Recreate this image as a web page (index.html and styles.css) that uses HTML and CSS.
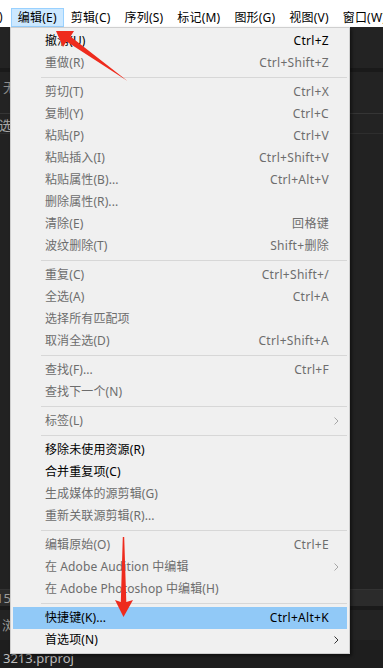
FILE: index.html
```html
<!DOCTYPE html>
<html lang="zh-CN">

    <head>
        <meta charset="UTF-8">
        <meta name="viewport" content="width=device-width, initial-scale=1.0">
        <title>编辑菜单</title>
        <link rel="stylesheet" href="styles.css">
    </head>

    <body>
        <div class="menubar">
            <span class="menubar-cut">)</span>
            <span class="menubar-item active">编辑(E)</span>
            <span class="menubar-item">剪辑(C)</span>
            <span class="menubar-item">序列(S)</span>
            <span class="menubar-item">标记(M)</span>
            <span class="menubar-item">图形(G)</span>
            <span class="menubar-item">视图(V)</span>
            <span class="menubar-item">窗口(W)</span>
        </div>

        <div class="workspace">
            <div class="panel-head"></div>
            <div class="panel-split"></div>
            <div class="panel-title">无标题</div>
            <div class="panel-row">选择</div>
            <div class="panel-body"></div>
            <div class="time-bar">15:00</div>
            <div class="browser-row">浏览器</div>
            <div class="project-row">3213.prproj</div>
        </div>

        <div class="dropdown">
            <div class="item"><span class="label">撤消(U)</span><span class="key">Ctrl+Z</span><span class="sub"></span></div>
            <div class="item off"><span class="label">重做(R)</span><span class="key">Ctrl+Shift+Z</span><span class="sub"></span></div>
            <div class="sep"></div>
            <div class="item off"><span class="label">剪切(T)</span><span class="key">Ctrl+X</span><span class="sub"></span></div>
            <div class="item off"><span class="label">复制(Y)</span><span class="key">Ctrl+C</span><span class="sub"></span></div>
            <div class="item off"><span class="label">粘贴(P)</span><span class="key">Ctrl+V</span><span class="sub"></span></div>
            <div class="item off"><span class="label">粘贴插入(I)</span><span class="key">Ctrl+Shift+V</span><span class="sub"></span></div>
            <div class="item off"><span class="label">粘贴属性(B)...</span><span class="key">Ctrl+Alt+V</span><span class="sub"></span></div>
            <div class="item off"><span class="label">删除属性(R)...</span><span class="key"></span><span class="sub"></span></div>
            <div class="item off"><span class="label">清除(E)</span><span class="key">回格键</span><span class="sub"></span></div>
            <div class="item off"><span class="label">波纹删除(T)</span><span class="key">Shift+删除</span><span class="sub"></span></div>
            <div class="sep"></div>
            <div class="item off"><span class="label">重复(C)</span><span class="key">Ctrl+Shift+/</span><span class="sub"></span></div>
            <div class="item off"><span class="label">全选(A)</span><span class="key">Ctrl+A</span><span class="sub"></span></div>
            <div class="item off"><span class="label">选择所有匹配项</span><span class="key"></span><span class="sub"></span></div>
            <div class="item off"><span class="label">取消全选(D)</span><span class="key">Ctrl+Shift+A</span><span class="sub"></span></div>
            <div class="sep"></div>
            <div class="item off"><span class="label">查找(F)...</span><span class="key">Ctrl+F</span><span class="sub"></span></div>
            <div class="item off"><span class="label">查找下一个(N)</span><span class="key"></span><span class="sub"></span></div>
            <div class="sep"></div>
            <div class="item off"><span class="label">标签(L)</span><span class="key"></span><span class="sub"><svg width="5" height="8" viewBox="0 0 5 8"><polyline points="0.5,0.5 4,4 0.5,7.5" /></svg></span></div>
            <div class="sep"></div>
            <div class="item"><span class="label">移除未使用资源(R)</span><span class="key"></span><span class="sub"></span></div>
            <div class="item"><span class="label">合并重复项(C)</span><span class="key"></span><span class="sub"></span></div>
            <div class="item off"><span class="label">生成媒体的源剪辑(G)</span><span class="key"></span><span class="sub"></span></div>
            <div class="item off"><span class="label">重新关联源剪辑(R)...</span><span class="key"></span><span class="sub"></span></div>
            <div class="sep"></div>
            <div class="item off"><span class="label">编辑原始(O)</span><span class="key">Ctrl+E</span><span class="sub"></span></div>
            <div class="item off"><span class="label">在 Adobe Audition 中编辑</span><span class="key"></span><span class="sub"><svg width="5" height="8" viewBox="0 0 5 8"><polyline points="0.5,0.5 4,4 0.5,7.5" /></svg></span></div>
            <div class="item off"><span class="label">在 Adobe Photoshop 中编辑(H)</span><span class="key"></span><span class="sub"></span></div>
            <div class="sep"></div>
            <div class="item hover"><span class="label">快捷键(K)...</span><span class="key">Ctrl+Alt+K</span><span class="sub"></span></div>
            <div class="item"><span class="label">首选项(N)</span><span class="key"></span><span class="sub"><svg width="5" height="8" viewBox="0 0 5 8"><polyline points="0.5,0.5 4,4 0.5,7.5" /></svg></span></div>
        </div>

        <!-- red pointers drawn over the menu -->
        <svg class="arrows" width="383" height="668" viewBox="0 0 383 668">
            <polygon points="56,31 74,31 70.5,36.5 127.5,81 66.5,41.5 63,47" />
            <polygon points="122.8,537 124.2,537 126.3,602 133,600 123.5,617 115,600 120.8,602" />
        </svg>
    </body>

</html>
```

FILE: styles.css
```css
body {
    margin: 0;
    padding: 0;
    width: 383px;
    height: 668px;
    overflow: hidden;
    position: relative;
    background-color: #1e1e1e;
    font-family: "Noto Sans", "Noto Sans CJK SC", sans-serif;
    font-size: 12px;
}

/* top menu bar */
.menubar {
    height: 27px;
    padding-top: 8px;
    box-sizing: border-box;
    background-color: #fff;
    display: flex;
    white-space: nowrap;
    overflow: hidden;
    color: #000;
    letter-spacing: 0.2px;
}

.menubar-cut {
    margin-left: -1px;
    padding-right: 8px;
    line-height: 17px;
}

.menubar-item {
    padding: 0 6px;
    border: 1px solid transparent;
    line-height: 17px;
}

.menubar-item.active {
    background-color: #cce8ff;
    border-color: #99d1ff;
}

/* dark panels behind the menu */
.workspace {
    display: flex;
    flex-direction: column;
    height: 641px;
    color: #8c8c8c;
    font-size: 13px;
}

.panel-head {
    height: 41px;
    background-color: #232323;
}

.panel-split {
    height: 4px;
    background-color: #1a1a1a;
}

.panel-title {
    height: 41px;
    line-height: 30px;
    padding-left: 3px;
    background-color: #232323;
    border-bottom: 1px solid #353535;
}

.panel-row {
    height: 19px;
    line-height: 22px;
    margin-left: -1px;
    color: #a8a8a8;
    background-color: #232323;
    border-bottom: 1px solid #2e2e2e;
}

.panel-body {
    flex: 1;
    background-color: #222;
}

.time-bar {
    height: 16px;
    line-height: 16px;
    text-indent: -4px;
    color: #9a9a9a;
    background-color: #2b2b2b;
    border-top: 1px solid #333;
    border-bottom: 4px solid #1a1a1a;
}

.browser-row {
    height: 30px;
    line-height: 30px;
    padding-left: 2px;
    color: #9a9a9a;
    background-color: #232323;
}

.project-row {
    height: 28px;
    line-height: 36px;
    padding-left: 3px;
    color: #bdbdbd;
    background-color: #1e1e1e;
}

/* the open edit menu */
.dropdown {
    position: absolute;
    left: 10px;
    top: 27px;
    width: 340px;
    box-sizing: border-box;
    padding: 2px;
    background-color: #f0f0f0;
    border: 1px solid #cfcfcf;
    box-shadow: 2px 2px 3px rgba(0, 0, 0, 0.45);
}

.item {
    height: 22px;
    line-height: 22px;
    display: flex;
    padding-left: 32px;
    color: #000;
    white-space: nowrap;
}

.item.off {
    color: #6d6d6d;
}

.item.hover {
    background-color: #91c9f7;
}

.label {
    flex: 1;
    letter-spacing: 0.1px;
}

.key {
    text-align: right;
    letter-spacing: 0.3px;
}

.sub {
    width: 18px;
    display: flex;
    align-items: center;
    padding-left: 5px;
    box-sizing: border-box;
}

.sub polyline {
    fill: none;
    stroke: #333;
    stroke-width: 1;
}

.item.off .sub polyline {
    stroke: #a6a6a6;
}

.sep {
    height: 1px;
    margin: 3px 0 3px 28px;
    background-color: #d7d7d7;
}

.arrows {
    position: absolute;
    left: 0;
    top: 0;
    pointer-events: none;
}

.arrows polygon {
    fill: #ee2b1d;
}
```
